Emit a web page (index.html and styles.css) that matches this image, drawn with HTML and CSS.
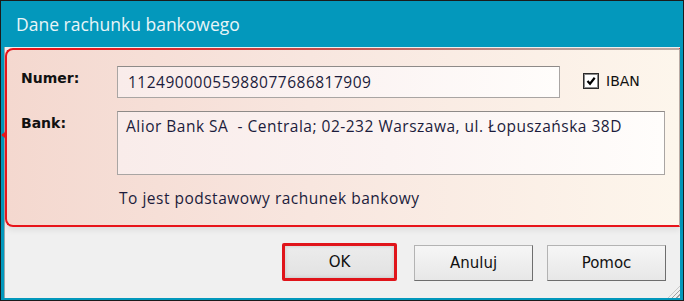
FILE: index.html
```html
<!doctype html>
<html>

<head>
	<meta charset="UTF-8">
	<title>Dane rachunku bankowego</title>
	<link rel="stylesheet" href="styles.css">
</head>

<body>
	<div class="window">
		<div class="titlebar">Dane rachunku bankowego</div>
		<div class="client">
			<div class="panel">
				<svg class="notch" width="8" height="20" viewBox="0 0 8 20">
					<path d="M6 0 L6 6 Q6 9 2 10 Q6 11 6 14 L6 20" fill="none" stroke="#e8141a" stroke-width="2" />
				</svg>
				<div class="row row_num">
					<label class="lbl">Numer:</label>
					<div class="field field_num">11249000055988077686817909</div>
					<div class="check">
						<span class="box">
							<svg width="10" height="10" viewBox="0 0 10 10">
								<path d="M1.5 5 L4 7.8 L8.7 1.8" fill="none" stroke="#000" stroke-width="2.2" />
							</svg>
						</span>
						<span class="check_txt">IBAN</span>
					</div>
				</div>
				<div class="row row_bank">
					<label class="lbl">Bank:</label>
					<div class="field field_bank">Alior Bank SA&nbsp; - Centrala; 02-232 Warszawa, ul. Łopuszańska 38D</div>
				</div>
				<div class="note">To jest podstawowy rachunek bankowy</div>
			</div>
			<div class="buttons">
				<button class="btn btn_ok">OK</button>
				<button class="btn">Anuluj</button>
				<button class="btn">Pomoc</button>
				<span class="grip"></span>
			</div>
		</div>
	</div>
</body>

</html>
```

FILE: styles.css
```css
html,
body {
	margin: 0;
	padding: 0;
}

body {
	width: 684px;
	height: 301px;
	overflow: hidden;
	font-family: "Open Sans", "Noto Sans", sans-serif;
}

.window {
	width: 684px;
	height: 301px;
	box-sizing: border-box;
	border: 1px solid #1b1b1b;
	background: #0398bc;
	padding: 0 3px 2px 3px;
	display: flex;
	flex-direction: column;
}

.titlebar {
	height: 46px;
	flex: none;
	padding-left: 12px;
	display: flex;
	align-items: center;
	font-size: 17.5px;
	color: #e9f5f8;
	box-sizing: border-box;
}

.client {
	flex: 1;
	background: #f0f0f0;
	display: flex;
	flex-direction: column;
	border-left: 1px solid #9aa6aa;
}

.panel {
	position: relative;
	height: 179px;
	box-sizing: border-box;
	margin-top: 1px;
	border: 2px solid #e8141a;
	border-right: 1px solid #b9aaa4;
	border-radius: 8px 0 0 8px;
	background: linear-gradient(to right, #f4d8cf, #f8e6df 45%, #fdf6ec);
	box-shadow: 0 3px 6px rgba(0, 0, 0, 0.08);
	padding: 16px 0 0 14px;
}

/* top edge of the highlight fades from red into the grey frame */
.panel::after {
	content: "";
	position: absolute;
	top: -2px;
	left: 60px;
	right: 0;
	height: 2px;
	background: linear-gradient(to right, #e8141a, #c0504c 45%, #b49a96 80%, #bcaaa4);
}

.notch {
	position: absolute;
	left: -7px;
	top: 75px;
}

.row {
	display: flex;
	align-items: flex-start;
}

.lbl {
	width: 96px;
	flex: none;
	font-family: "DejaVu Sans", sans-serif;
	font-weight: bold;
	font-size: 14px;
	color: #111;
	padding-top: 4px;
}

.field {
	box-sizing: border-box;
	border: 1px solid #a9a5a3;
	border-top-color: #8e8a88;
	background: linear-gradient(to right, #f9ecea, #fbf3f2 50%, #fffdfb);
	color: #1c1c3c;
	font-size: 15.5px;
	letter-spacing: 0.5px;
	padding-left: 10px;
}

.field_num {
	width: 443px;
	height: 32px;
	line-height: 30px;
}

.field_bank {
	width: 548px;
	height: 64px;
	padding-left: 8px;
	padding-top: 4px;
	line-height: 20px;
}

.row_bank {
	margin-top: 13px;
}

.check {
	display: flex;
	align-items: center;
	margin-left: 23px;
	margin-top: 7px;
}

.box {
	width: 16px;
	height: 16px;
	box-sizing: border-box;
	border: 1px solid #2a2a2a;
	box-shadow: inset 0 0 0 1px #8a8a8a;
	background: #fff;
	display: flex;
	align-items: center;
	justify-content: center;
}

.check_txt {
	margin-left: 7px;
	font-family: "DejaVu Sans", sans-serif;
	font-size: 14px;
	color: #111;
}

.note {
	margin: 12px 0 0 98px;
	font-size: 15.5px;
	letter-spacing: 0.5px;
	color: #1c1c3c;
}

.buttons {
	position: relative;
	flex: 1;
	display: flex;
	justify-content: flex-end;
	align-items: flex-start;
	padding: 18px 14px 0 0;
	gap: 14px;
}

.btn {
	width: 119px;
	height: 36px;
	box-sizing: border-box;
	border: 1px solid #b3b3b3;
	border-right-color: #6e6e6e;
	border-bottom-color: #6e6e6e;
	background: linear-gradient(#f6f6f6, #e7e7e7);
	font-family: "DejaVu Sans", sans-serif;
	font-size: 15px;
	color: #111;
	padding: 0;
}

.btn_ok {
	width: 115px;
	height: 38px;
	margin-top: -2px;
	margin-right: 3px;
	border: 3px solid #e0141a;
	border-radius: 2px;
	background: linear-gradient(#ececec, #e2e2e2);
	box-shadow: inset 0 0 4px rgba(0, 0, 0, 0.15);
}

.grip {
	position: absolute;
	right: 0;
	bottom: 0;
	width: 12px;
	height: 12px;
	background: repeating-linear-gradient(135deg, transparent 0 2px, #a0a0a0 2px 3px);
	clip-path: polygon(100% 0, 100% 100%, 0 100%);
}
```
